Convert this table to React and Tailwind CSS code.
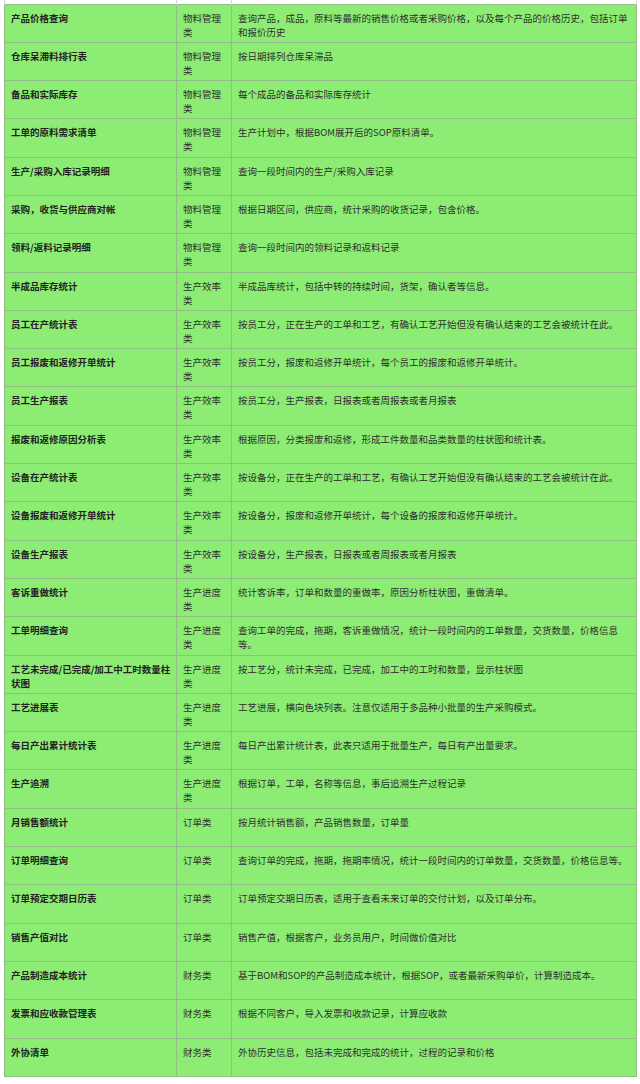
const rows = [
  ["产品价格查询", "物料管理类", "查询产品，成品，原料等最新的销售价格或者采购价格，以及每个产品的价格历史，包括订单和报价历史"],
  ["仓库呆滞料排行表", "物料管理类", "按日期排列仓库呆滞品"],
  ["备品和实际库存", "物料管理类", "每个成品的备品和实际库存统计"],
  ["工单的原料需求清单", "物料管理类", "生产计划中，根据BOM展开后的SOP原料清单。"],
  ["生产/采购入库记录明细", "物料管理类", "查询一段时间内的生产/采购入库记录"],
  ["采购，收货与供应商对帐", "物料管理类", "根据日期区间，供应商，统计采购的收货记录，包含价格。"],
  ["领料/返料记录明细", "物料管理类", "查询一段时间内的领料记录和返料记录"],
  ["半成品库存统计", "生产效率类", "半成品库统计，包括中转的持续时间，货架，确认者等信息。"],
  ["员工在产统计表", "生产效率类", "按员工分，正在生产的工单和工艺，有确认工艺开始但没有确认结束的工艺会被统计在此。"],
  ["员工报废和返修开单统计", "生产效率类", "按员工分，报废和返修开单统计，每个员工的报废和返修开单统计。"],
  ["员工生产报表", "生产效率类", "按员工分，生产报表，日报表或者周报表或者月报表"],
  ["报废和返修原因分析表", "生产效率类", "根据原因，分类报废和返修，形成工件数量和品类数量的柱状图和统计表。"],
  ["设备在产统计表", "生产效率类", "按设备分，正在生产的工单和工艺，有确认工艺开始但没有确认结束的工艺会被统计在此。"],
  ["设备报废和返修开单统计", "生产效率类", "按设备分，报废和返修开单统计，每个设备的报废和返修开单统计。"],
  ["设备生产报表", "生产效率类", "按设备分，生产报表，日报表或者周报表或者月报表"],
  ["客诉重做统计", "生产进度类", "统计客诉率，订单和数量的重做率，原因分析柱状图，重做清单。"],
  ["工单明细查询", "生产进度类", "查询工单的完成，拖期，客诉重做情况，统计一段时间内的工单数量，交货数量，价格信息等。"],
  ["工艺未完成/已完成/加工中工时数量柱状图", "生产进度类", "按工艺分，统计未完成，已完成，加工中的工时和数量，显示柱状图"],
  ["工艺进展表", "生产进度类", "工艺进展，横向色块列表。注意仅适用于多品种小批量的生产采购模式。"],
  ["每日产出累计统计表", "生产进度类", "每日产出累计统计表，此表只适用于批量生产，每日有产出量要求。"],
  ["生产追溯", "生产进度类", "根据订单，工单，名称等信息，事后追溯生产过程记录"],
  ["月销售额统计", "订单类", "按月统计销售额，产品销售数量，订单量"],
  ["订单明细查询", "订单类", "查询订单的完成，拖期，拖期率情况，统计一段时间内的订单数量，交货数量，价格信息等。"],
  ["订单预定交期日历表", "订单类", "订单预定交期日历表，适用于查看未来订单的交付计划，以及订单分布。"],
  ["销售产值对比", "订单类", "销售产值，根据客户，业务员用户，时间做价值对比"],
  ["产品制造成本统计", "财务类", "基于BOM和SOP的产品制造成本统计，根据SOP，或者最新采购单价，计算制造成本。"],
  ["发票和应收款管理表", "财务类", "根据不同客户，导入发票和收款记录，计算应收款"],
  ["外协清单", "财务类", "外协历史信息，包括未完成和完成的统计，过程的记录和价格"],
];

const cell = "border border-[#93bd86] align-top pt-[6px] leading-[14px] text-[9.5px]";

export default function App() {
  return (
    <div
      className="w-[640px] h-[1084px] bg-white overflow-hidden pl-[4px]"
      style={{ fontFamily: '"Noto Sans CJK SC", "Noto Sans", sans-serif' }}
    >
      <table className="border-collapse table-fixed w-[632px] text-[#2f2f2f]">
        <colgroup>
          <col className="w-[172px]" />
          <col className="w-[55px]" />
          <col className="w-[405px]" />
        </colgroup>
        <tbody>
          <tr className="h-[4px] bg-white">
            <td className="border-x border-[#d6d6d6] p-0" />
            <td className="border-x border-[#d6d6d6] p-0" />
            <td className="border-x border-[#d6d6d6] p-0" />
          </tr>
          {rows.map(([name, kind, desc]) => (
            <tr key={name} className="h-[38.3px] bg-[#8dec74]">
              <td className={`${cell} pl-[6px] pr-[4px] font-bold text-[#222]`}>{name}</td>
              <td className={`${cell} px-[6px]`}>{kind}</td>
              <td className={`${cell} px-[6px]`}>{desc}</td>
            </tr>
          ))}
        </tbody>
      </table>
    </div>
  );
}
